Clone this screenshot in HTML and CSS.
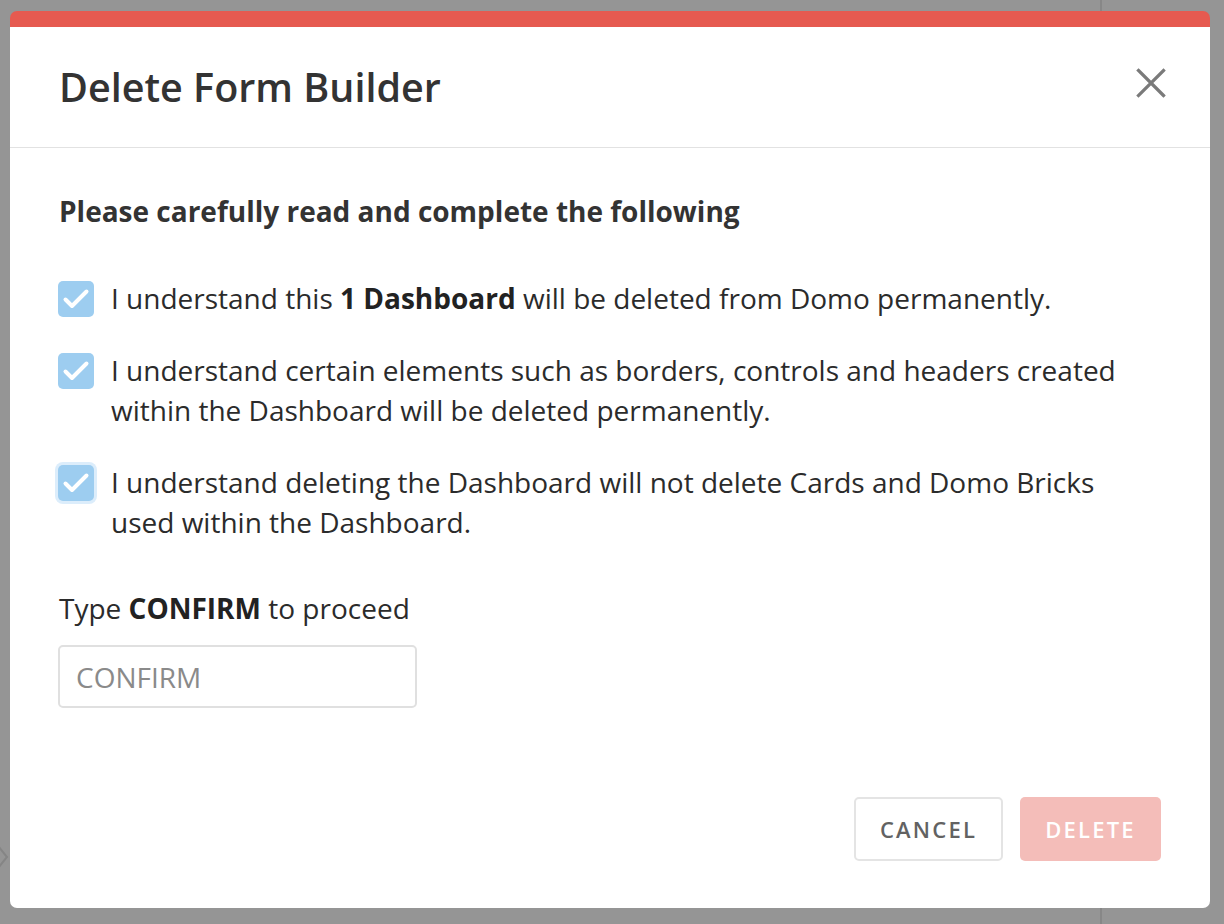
FILE: index.html
```html
<!DOCTYPE html>
<html lang="en">
<head>
<meta charset="utf-8">
<title>Delete Form Builder</title>
<link rel="stylesheet" href="styles.css">
</head>
<body>
<div class="page">
  <svg class="bg-chevron" width="12" height="30" viewBox="0 0 12 30"><path d="M0 4 L9 15 L0 26" fill="none" stroke="#858585" stroke-width="2"/></svg>
  <div class="modal">
    <div class="header">
      <h1 class="title">Delete Form Builder</h1>
      <button class="close" aria-label="Close">
        <svg width="30" height="30" viewBox="0 0 30 30"><path d="M2.5 2.5 L27.5 27.5 M27.5 2.5 L2.5 27.5" stroke="#7a7a7a" stroke-width="3.2" stroke-linecap="square" fill="none"/></svg>
      </button>
    </div>
    <div class="body">
      <p class="intro">Please carefully read and complete the following</p>
      <div class="checks">
        <label class="check-row">
          <span class="box"><svg width="36" height="36" viewBox="0 0 36 36"><path d="M7.5 18.5 L14 25 L28.5 10.5" fill="none" stroke="#fff" stroke-width="4" stroke-linecap="round" stroke-linejoin="round"/></svg></span>
          <span class="check-text">I understand this <b>1 Dashboard</b> will be deleted from Domo permanently.</span>
        </label>
        <label class="check-row">
          <span class="box"><svg width="36" height="36" viewBox="0 0 36 36"><path d="M7.5 18.5 L14 25 L28.5 10.5" fill="none" stroke="#fff" stroke-width="4" stroke-linecap="round" stroke-linejoin="round"/></svg></span>
          <span class="check-text">I understand certain elements such as borders, controls and headers created within the Dashboard will be deleted permanently.</span>
        </label>
        <label class="check-row">
          <span class="box focused"><svg width="36" height="36" viewBox="0 0 36 36"><path d="M7.5 18.5 L14 25 L28.5 10.5" fill="none" stroke="#fff" stroke-width="4" stroke-linecap="round" stroke-linejoin="round"/></svg></span>
          <span class="check-text">I understand deleting the Dashboard will not delete Cards and Domo Bricks used within the Dashboard.</span>
        </label>
      </div>
      <p class="confirm-label">Type <b>CONFIRM</b> to proceed</p>
      <input class="confirm-input" type="text" placeholder="CONFIRM">
    </div>
    <div class="footer">
      <button class="btn btn-cancel">CANCEL</button>
      <button class="btn btn-delete">DELETE</button>
    </div>
  </div>
</div>
</body>
</html>
```

FILE: styles.css
```css
* { box-sizing: border-box; }
html, body { margin: 0; padding: 0; }
body { font-family: "Open Sans", "Noto Sans", sans-serif; color: #333; }

.page {
  position: relative;
  width: 1224px;
  height: 924px;
  padding: 11px 14px 16px 10px;
  background-color: #959595;
  background-image: linear-gradient(to right, transparent 1100px, #878787 1100px, #878787 1102px, transparent 1102px);
  overflow: hidden;
}

.bg-chevron {
  position: absolute;
  left: -2px;
  top: 842px;
}

.modal {
  position: relative;
  width: 1200px;
  height: 897px;
  background: #fff;
  border-top: 16px solid #e65a50;
  border-radius: 7px;
  display: flex;
  flex-direction: column;
}

.header {
  height: 121px;
  border-bottom: 1px solid #e2e2e2;
  display: flex;
  align-items: center;
  justify-content: space-between;
  padding: 0 44px 0 49px;
}

.title {
  margin: 0;
  font-size: 39.5px;
  font-weight: 600;
  color: #333;
}

.close {
  border: 0;
  background: none;
  padding: 0;
  width: 30px;
  height: 30px;
  display: flex;
  margin-top: -8px;
  cursor: pointer;
}

.body {
  padding: 45px 50px 0 48px;
  display: flex;
  flex-direction: column;
  align-items: flex-start;
}

.intro {
  margin: 0 0 0 1px;
  font-size: 28px;
  line-height: 36px;
  font-weight: 700;
  color: #333;
}

.checks {
  margin-top: 49px;
  display: flex;
  flex-direction: column;
  gap: 32px;
}

.check-row {
  display: flex;
  align-items: flex-start;
  gap: 17px;
}

.box {
  flex: 0 0 36px;
  width: 36px;
  height: 36px;
  margin-top: 3px;
  border-radius: 5px;
  background: #9dcdf0;
  display: flex;
}

.box.focused {
  box-shadow: 0 0 0 3px #dcedfb;
}

.check-text {
  font-size: 28px;
  line-height: 40px;
  color: #2b2b2b;
}

.check-text b { font-weight: 700; color: #222; }

.confirm-label {
  margin: 48px 0 0 1px;
  font-size: 28px;
  line-height: 36px;
  color: #2b2b2b;
}

.confirm-label b { font-weight: 700; color: #222; }

.confirm-input {
  margin: 19px 0 0 0;
  width: 359px;
  height: 63px;
  border: 2px solid #e0e0e0;
  border-radius: 5px;
  padding: 0 16px;
  font-family: "Open Sans", "Noto Sans", sans-serif;
  font-size: 28px;
  color: #333;
  outline: none;
}

.confirm-input::placeholder { color: #8a8a8a; }

.footer {
  margin-top: auto;
  display: flex;
  justify-content: flex-end;
  gap: 17px;
  padding: 0 49px 47px 0;
}

.btn {
  height: 64px;
  border-radius: 5px;
  font-family: "Open Sans", "Noto Sans", sans-serif;
  font-size: 22px;
  font-weight: 600;
  letter-spacing: 2.2px;
  cursor: pointer;
}

.btn-cancel {
  width: 149px;
  background: #fff;
  border: 2px solid #e4e4e4;
  color: #626262;
}

.btn-delete {
  width: 141px;
  background: #f4bdb9;
  border: 0;
  color: #fff;
}
```
